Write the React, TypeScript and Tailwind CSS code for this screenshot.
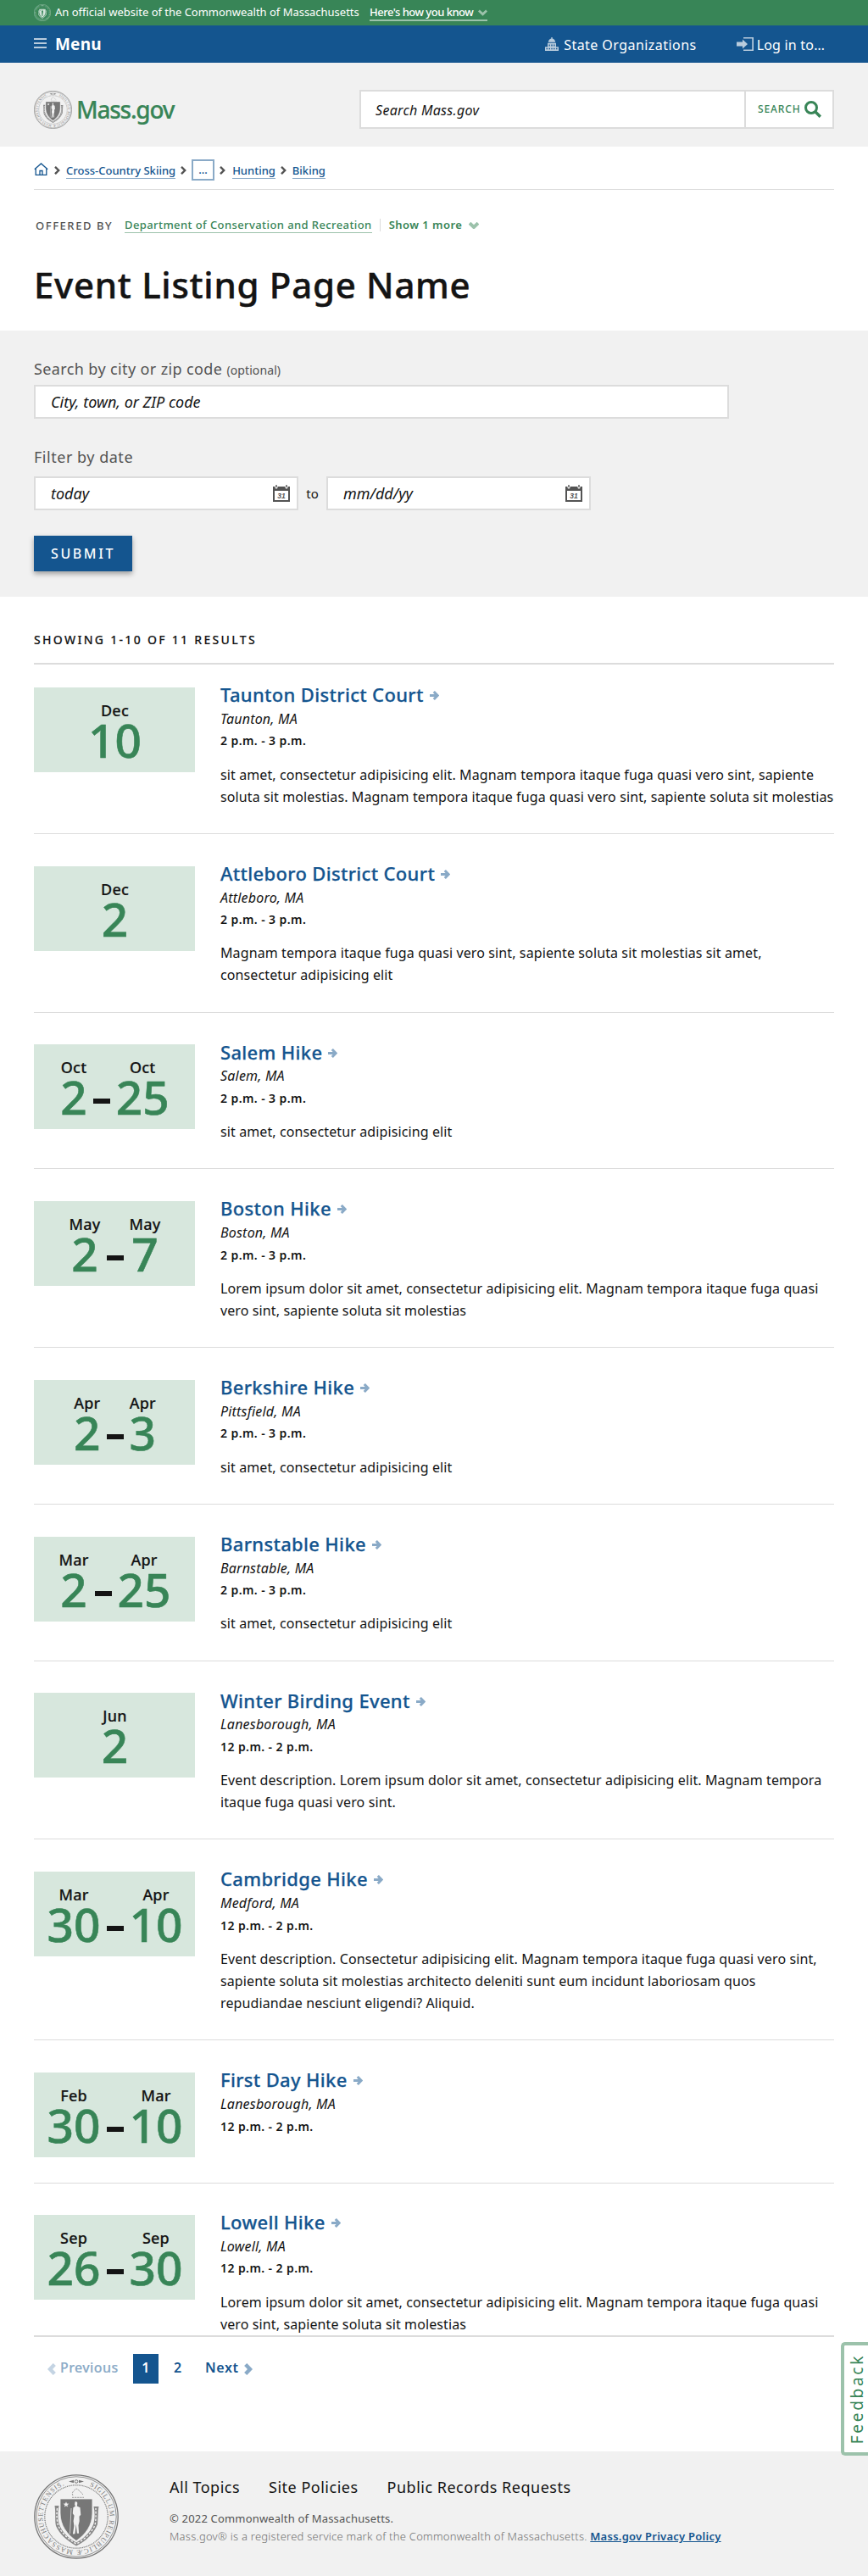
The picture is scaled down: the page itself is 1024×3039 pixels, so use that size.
import React from 'react';

type Stamp = { month: string; day: string };
type EventItem = {
  title: string;
  place: string;
  time: string;
  start: Stamp;
  end?: Stamp;
  lines: string[];
};

const EVENTS: EventItem[] = [
  {
    title: 'Taunton District Court',
    place: 'Taunton, MA',
    time: '2 p.m. - 3 p.m.',
    start: { month: 'Dec', day: '10' },
    lines: [
      'sit amet, consectetur adipisicing elit. Magnam tempora itaque fuga quasi vero sint, sapiente',
      'soluta sit molestias. Magnam tempora itaque fuga quasi vero sint, sapiente soluta sit molestias',
    ],
  },
  {
    title: 'Attleboro District Court',
    place: 'Attleboro, MA',
    time: '2 p.m. - 3 p.m.',
    start: { month: 'Dec', day: '2' },
    lines: [
      'Magnam tempora itaque fuga quasi vero sint, sapiente soluta sit molestias sit amet,',
      'consectetur adipisicing elit',
    ],
  },
  {
    title: 'Salem Hike',
    place: 'Salem, MA',
    time: '2 p.m. - 3 p.m.',
    start: { month: 'Oct', day: '2' },
    end: { month: 'Oct', day: '25' },
    lines: ['sit amet, consectetur adipisicing elit'],
  },
  {
    title: 'Boston Hike',
    place: 'Boston, MA',
    time: '2 p.m. - 3 p.m.',
    start: { month: 'May', day: '2' },
    end: { month: 'May', day: '7' },
    lines: [
      'Lorem ipsum dolor sit amet, consectetur adipisicing elit. Magnam tempora itaque fuga quasi',
      'vero sint, sapiente soluta sit molestias',
    ],
  },
  {
    title: 'Berkshire Hike',
    place: 'Pittsfield, MA',
    time: '2 p.m. - 3 p.m.',
    start: { month: 'Apr', day: '2' },
    end: { month: 'Apr', day: '3' },
    lines: ['sit amet, consectetur adipisicing elit'],
  },
  {
    title: 'Barnstable Hike',
    place: 'Barnstable, MA',
    time: '2 p.m. - 3 p.m.',
    start: { month: 'Mar', day: '2' },
    end: { month: 'Apr', day: '25' },
    lines: ['sit amet, consectetur adipisicing elit'],
  },
  {
    title: 'Winter Birding Event',
    place: 'Lanesborough, MA',
    time: '12 p.m. - 2 p.m.',
    start: { month: 'Jun', day: '2' },
    lines: [
      'Event description. Lorem ipsum dolor sit amet, consectetur adipisicing elit. Magnam tempora',
      'itaque fuga quasi vero sint.',
    ],
  },
  {
    title: 'Cambridge Hike',
    place: 'Medford, MA',
    time: '12 p.m. - 2 p.m.',
    start: { month: 'Mar', day: '30' },
    end: { month: 'Apr', day: '10' },
    lines: [
      'Event description. Consectetur adipisicing elit. Magnam tempora itaque fuga quasi vero sint,',
      'sapiente soluta sit molestias architecto deleniti sunt eum incidunt laboriosam quos',
      'repudiandae nesciunt eligendi? Aliquid.',
    ],
  },
  {
    title: 'First Day Hike',
    place: 'Lanesborough, MA',
    time: '12 p.m. - 2 p.m.',
    start: { month: 'Feb', day: '30' },
    end: { month: 'Mar', day: '10' },
    lines: [],
  },
  {
    title: 'Lowell Hike',
    place: 'Lowell, MA',
    time: '12 p.m. - 2 p.m.',
    start: { month: 'Sep', day: '26' },
    end: { month: 'Sep', day: '30' },
    lines: [
      'Lorem ipsum dolor sit amet, consectetur adipisicing elit. Magnam tempora itaque fuga quasi',
      'vero sint, sapiente soluta sit molestias',
    ],
  },
];

function Seal({ id, ink, paper, className }: { id: string; ink: string; paper: string; className: string }) {
  return (
    <svg viewBox="0 0 100 100" className={className} fill="none">
      <circle cx="50" cy="50" r="49.2" stroke={ink} strokeWidth="1.3" />
      <circle cx="50" cy="50" r="47.2" stroke={ink} strokeWidth="0.8" />
      <circle cx="50" cy="50" r="37.2" stroke={ink} strokeWidth="1.2" strokeDasharray="1 0.8" />
      <path id={id} d="M50 10.5a39.5 39.5 0 1 1-.01 0" />
      <text fill={ink} fontFamily="Liberation Serif, serif" fontSize="8.2">
        <textPath href={`#${id}`} startOffset="16" textLength="217">
          SIGILLUM REIPUBLICÆ MASSACHUSETTENSIS.
        </textPath>
      </text>
      <path d="M41 8.5l6-1.8v3.6zM59 8.5l-6-1.8v3.6z" fill={ink} />
      <circle cx="50" cy="8.5" r="1.8" stroke={ink} strokeWidth="1" />
      <path d="M46 25c-2-3 1-6 4-8 3 1 5 4 8 7M45 27.3h14" stroke={ink} strokeWidth="1" strokeDasharray="2.2 0.9" opacity="0.7" />
      <path
        d="M24.500 37h5c-1.500 8-1.500 15 0 21 3 9 10 17 20.500 22.500C60.500 75 67.500 67 70.500 58c1.500-6 1.500-13 0-20h6c-1 6-.5 12-1.500 21-4 10-12 19-25 25.500C38 78 30 70 26 61c-1.500-7 0-14-1.500-24z"
        fill={ink}
        opacity="0.85"
      />
      <path d="M27.500 40c-1 8-.5 14 1 20 4 9 11 16 21.500 22 10-5 18-13 22-22 1.500-7 1-13 1-20" stroke={paper} strokeWidth="1.400" strokeDasharray="2.600 1.800" />
      <path d="M31 29h38v17c0 14-8 25-19 32.500C39 71 31 60 31 46z" fill={ink} stroke={paper} strokeWidth="0.8" />
      <path d="M38 32.300l.9 2.300 2.500.1-2 1.500.7 2.400-2.100-1.400-2.100 1.400.7-2.400-2-1.500 2.500-.1z" fill={paper} />
      <path
        d="M48.500 32.500c1.500-.8 3.200.3 2.700 2.400l-.4 2.600 3.700 1.800.8 8.500-1.800 2 .2 5.500-1.200 5 .6 9.500h-2.200l-1.200-11-1.200 11.500-2.600.2 1.500-9.700-.8-5.500 1-6.500-1.800-2.500.6-7 2.500-1.500-.8-2.200z"
        fill={paper}
      />
      <path d="M44 40l-1.500 30" stroke={paper} strokeWidth="0.7" />
    </svg>
  );
}

function Chevron({ className, width = 3 }: { className: string; width?: number }) {
  return (
    <svg viewBox="0 0 12 8" className={className} fill="none" stroke="currentColor" strokeWidth={width}>
      <path d="M1 1.200l5 4.800 5-4.800" />
    </svg>
  );
}

function Crumb() {
  return (
    <svg viewBox="0 0 7 10" className="h-[10px] w-[7px] shrink-0 text-[#535353]" fill="none" stroke="currentColor" strokeWidth="2.400">
      <path d="M1 .8L5.200 5 1 9.200" />
    </svg>
  );
}

function Arrow() {
  return (
    <svg viewBox="0 0 11 11" className="ml-[7px] mt-[3px] h-[11px] w-[11px] shrink-0 text-[#8aaac7]" fill="none" stroke="currentColor" strokeWidth="3">
      <path d="M0 5.500h9M4.800 1l4.300 4.500L4.800 10" />
    </svg>
  );
}

function Calendar() {
  return (
    <svg viewBox="0 0 20 20" className="h-5 w-5 shrink-0">
      <path d="M0 2h20v18H0z" fill="#535353" />
      <path d="M2 7h16v11H2z" fill="#fff" />
      <path d="M2.500 0h3v3a1.500 1.500 0 0 1-3 0zM14.500 0h3v3a1.500 1.500 0 0 1-3 0z" fill="#fff" />
      <path d="M3.300 0h1.400v3H3.300zM15.300 0h1.400v3h-1.400z" fill="#535353" />
      <text x="10" y="15.500" textAnchor="middle" fontFamily="Liberation Sans, sans-serif" fontWeight="700" fontSize="8.500" fill="#535353">
        31
      </text>
    </svg>
  );
}

function DateColumn({ month, day }: Stamp) {
  return (
    <div className="flex flex-col items-center">
      <span className="text-[18px] font-medium leading-6 tracking-[0.200px] [-webkit-text-stroke:0.2px]">{month}</span>
      <span className="-mt-px text-[55px] font-medium leading-[48px] text-[#388557] [-webkit-text-stroke:0.6px]">{day}</span>
    </div>
  );
}

function EventRow({ event, last }: { event: EventItem; last: boolean }) {
  const spacing = last
    ? 'flex gap-[30px]'
    : event.lines.length > 0
      ? 'mb-[37.800px] flex gap-[30px] border-b border-[#dcdcdc] pb-[29px]'
      : 'mb-[36.800px] flex gap-[30px] border-b border-[#dcdcdc] pb-[30px]';
  return (
    <li className={spacing}>
      <div className="flex h-[100px] w-[190px] shrink-0 justify-center gap-[7px] bg-[#d7e7dd] pl-px pt-[15px]">
        <DateColumn {...event.start} />
        {event.end && (
          <>
            <span className="mt-[49px] h-[6px] w-5 bg-[#141414]" />
            <DateColumn {...event.end} />
          </>
        )}
      </div>
      <div className="min-w-0 grow">
        <h3 className="-mt-[4.800px] flex items-center whitespace-nowrap text-[22px] font-medium leading-[26px] tracking-[0.330px] text-[#14558f] [-webkit-text-stroke:0.25px]">
          {event.title}
          <Arrow />
        </h3>
        <p className="mt-[3.900px] text-base italic leading-6 tracking-[0.200px]">{event.place}</p>
        <p className="mt-[4.500px] text-sm font-semibold leading-5 tracking-[0.420px]">{event.time}</p>
        {event.lines.length > 0 && (
          <p className="mt-[16.200px] pb-[1.200px] text-base leading-[26px] tracking-[0.110px]">
            {event.lines.map((line) => (
              <span key={line} className="block whitespace-nowrap">
                {line}
              </span>
            ))}
          </p>
        )}
      </div>
    </li>
  );
}

export default function App() {
  return (
    <div className="relative h-[3039px] w-[1024px] overflow-hidden bg-white font-['Noto_Sans',sans-serif] text-[#141414]">
      <div className="flex h-[30px] items-center bg-[#388557] px-10 text-[13px] text-white">
        <Seal id="seal-banner" ink="#d5e6dc" paper="#388557" className="h-5 w-5" />
        <span className="-mt-px ml-[5px] w-[371px] whitespace-nowrap tracking-[-0.020px]">
          An official website of the Commonwealth of Massachusetts
        </span>
        <a className="mt-[2px] flex h-[18px] w-[139px] items-center justify-between whitespace-nowrap border-b-2 border-[#9cc2ab] font-medium tracking-[-0.500px]">
          <span className="-mt-px">Here's how you know</span>
          <Chevron className="h-[8px] w-[11px] text-[#9cc2ab]" />
        </a>
      </div>

      <header>
        <nav className="flex h-[44px] items-center bg-[#14558f] pl-10 pr-[51px] text-white">
          <div className="mb-[2px] flex h-3 w-[15px] flex-col justify-between">
            <span className="h-[2px] bg-[#b9ccdd]" />
            <span className="h-[2px] bg-[#b9ccdd]" />
            <span className="h-[2px] bg-[#b9ccdd]" />
          </div>
          <span className="ml-[10px] text-[19px] font-bold tracking-[0.200px]">Menu</span>
          <div className="ml-auto flex items-center gap-[6px]">
            <svg viewBox="0 0 16 16" className="h-4 w-4" fill="#b9ccdd">
              <path d="M7.300 0h1.400v1.500c2 .4 3.300 2 3.500 4.200H3.800C4 3.500 5.300 1.900 7.300 1.500z" />
              <path d="M3 6.800h10v4.400h3V16H0v-4.800h3zM4.500 8.400v2h1.300v-2zm2.800 0v2h1.400v-2zm2.900 0v2h1.300v-2zM1.500 12.800v1.400H3v-1.400zm3 0v1.400H6v-1.400zm2.800 0v1.400h1.400v-1.400zm2.700 0v1.400h1.500v-1.400zm3 0v1.400h1.500v-1.400z" fillRule="evenodd" />
            </svg>
            <span className="pt-px text-base tracking-[0.450px]">State Organizations</span>
          </div>
          <div className="ml-[47px] flex items-center gap-[4px]">
            <svg viewBox="0 0 20 16" className="h-4 w-5" fill="#b9ccdd">
              <path d="M8 0h12v16H8v-1.500h10.300v-13H8z" />
              <path d="M0 5.500h7V2.600L13 8l-6 5.400v-2.900H0z" />
            </svg>
            <span className="pt-px text-base tracking-[0.200px]">Log in to…</span>
          </div>
        </nav>
        <div className="flex h-[99px] items-start bg-[#f1f1f1] px-10">
          <div className="flex items-center pt-[33px]">
            <Seal id="seal-header" ink="#777777" paper="#f1f1f1" className="h-[45px] w-[45px]" />
            <span className="ml-[5px] text-[28px] font-medium leading-[42px] tracking-[-1.250px] text-[#388557] [-webkit-text-stroke:0.2px]">
              <span className="relative -top-px">Mass.gov</span>
            </span>
          </div>
          <div className="ml-auto mt-8 flex h-[46px] w-[560px] border-2 border-[#dcdcdc] bg-white">
            <span className="flex grow items-center pl-[17px] pt-px text-base italic tracking-[0.300px]">Search Mass.gov</span>
            <span className="flex w-[104px] items-center border-l-2 border-[#dcdcdc] pl-[14px] text-[#388557]">
              <span className="text-xs font-medium tracking-[0.880px]">SEARCH</span>
              <svg viewBox="0 0 20 20" className="-mt-px ml-[4px] h-5 w-5" fill="none" stroke="currentColor">
                <circle cx="8" cy="8" r="6.500" strokeWidth="3" />
                <path d="M12.500 12.500l6.300 6.300" strokeWidth="3.400" />
              </svg>
            </span>
          </div>
        </div>
      </header>

      <main>
        <section className="h-[217px] px-10">
          <div className="flex h-[51px] items-start border-b border-[#dcdcdc] pt-[15px] text-[13px] font-medium leading-[25px] text-[#14558f]">
            <svg viewBox="0 0 17 15" className="mt-[4px] h-[15px] w-[17px]" fill="none" stroke="#14558f" strokeWidth="1.300">
              <path d="M.8 7.800L8.500.9l7.700 6.900M2.200 6.800v7.500h12.600V6.800M7 14V9.500h3V14" />
            </svg>
            <div className="flex h-[25px] items-center pl-[7px]">
              <Crumb />
              <a className="mt-[2px] ml-[7px] border-b border-[#8aaac7] pb-px leading-[16px]">Cross-Country Skiing</a>
              <span className="w-[6px]" />
              <Crumb />
              <span className="ml-[6px] flex h-[25px] w-[27px] justify-center border-2 border-[#8aaac7] leading-[21px]">…</span>
              <span className="w-[6px]" />
              <Crumb />
              <a className="mt-[2px] ml-[8px] border-b border-[#8aaac7] pb-px leading-[16px]">Hunting</a>
              <span className="w-[6px]" />
              <Crumb />
              <a className="mt-[2px] ml-[7px] border-b border-[#8aaac7] pb-px leading-[16px]">Biking</a>
            </div>
          </div>
          <div className="mt-[32px] flex h-[20px] items-start pl-[2px] text-[13px] leading-[18px]">
            <span className="mt-px w-[105px] font-medium tracking-[1.550px] text-[#535353]">OFFERED BY</span>
            <a className="border-b border-[#9cc2ab] font-medium tracking-[0.410px] text-[#388557]">Department of Conservation and Recreation</a>
            <span className="ml-[9px] mt-[2px] h-[15px] w-px bg-[#dcdcdc]" />
            <span className="ml-[10px] font-semibold tracking-[0.450px] text-[#388557]">Show 1 more</span>
            <Chevron className="ml-[8px] mt-[6px] h-[8px] w-[12px] text-[#9cc2ab]" width={4} />
          </div>
          <h1 className="mt-[32px] text-[42px] font-medium leading-[56px] tracking-[0.710px] [-webkit-text-stroke:0.45px]">Event Listing Page Name</h1>
        </section>

        <section className="h-[314px] bg-[#f1f1f1] px-10 pt-[33px]">
          <label className="block text-lg leading-6 tracking-[0.380px] text-[#535353]">
            Search by city or zip code <span className="text-sm tracking-[0.100px]">(optional)</span>
          </label>
          <div className="mt-[7px] flex h-10 w-[820px] items-center border-2 border-[#dcdcdc] bg-white pl-[18px] text-lg italic">
            City, town, or ZIP code
          </div>
          <div className="mt-[33px] text-lg leading-6 tracking-[0.520px] text-[#535353]">Filter by date</div>
          <div className="mt-[11px] flex h-10 items-center">
            <div className="flex h-10 w-[312px] items-center justify-between border-2 border-[#dcdcdc] bg-white pl-[18px] pr-[8px] text-lg italic">
              today
              <Calendar />
            </div>
            <span className="w-[33px] pt-px text-center text-[15px]">to</span>
            <div className="flex h-10 w-[312px] items-center justify-between border-2 border-[#dcdcdc] bg-white pl-[18px] pr-[8px] text-lg italic">
              mm/dd/yy
              <Calendar />
            </div>
          </div>
          <button className="mt-[30px] flex h-[42px] w-[116px] items-center bg-[#14558f] pl-5 text-base font-medium tracking-[2.600px] text-white shadow-[0_3px_6px_rgba(0,0,0,0.35)]">
            SUBMIT
          </button>
        </section>

        <section className="h-[2188px] px-10 pt-[40px]">
          <h2 className="text-sm font-medium leading-[20px] tracking-[2.300px] [-webkit-text-stroke:0.15px]">
            <span className="relative top-px">SHOWING 1-10 OF 11 RESULTS</span>
          </h2>
          <div className="mt-[18px] h-[2px] bg-[#dcdcdc]" />
          <ul className="mt-[26.800px]">
            {EVENTS.map((event, i) => (
              <EventRow key={event.title} event={event} last={i === EVENTS.length - 1} />
            ))}
          </ul>
          <div className="-mt-px h-[2px] bg-[#dcdcdc]" />
          <div className="mt-[20px] flex h-[35px] items-center pl-4 text-base tracking-[0.400px]">
            <svg viewBox="0 0 10 14" className="mt-[1px] h-[14px] w-[10px]" fill="none" stroke="#c4d4e3" strokeWidth="4.400">
              <path d="M8.300 1.500L3 7l5.300 5.500" />
            </svg>
            <span className="ml-[5px] w-[86px] pb-[2px] font-medium text-[#8aaac7] [-webkit-text-stroke:0.15px]">Previous</span>
            <span className="flex h-[35px] w-[30px] items-center justify-center bg-[#14558f] pb-[3px] font-semibold text-white">1</span>
            <span className="ml-[18px] w-[37px] pb-[2px] font-semibold text-[#14558f]">2</span>
            <span className="pb-[2px] font-semibold tracking-[0.600px] text-[#14558f]">Next</span>
            <svg viewBox="0 0 10 14" className="ml-[6px] mt-[1px] h-[14px] w-[10px]" fill="none" stroke="#8aaac7" strokeWidth="4.400">
              <path d="M1.700 1.500L7 7l-5.300 5.500" />
            </svg>
          </div>
        </section>
      </main>

      <footer className="flex h-[147px] bg-[#f1f1f1] px-10 pt-[27px]">
        <Seal id="seal-footer" ink="#777777" paper="#f1f1f1" className="h-[100px] w-[100px]" />
        <div className="ml-[60px] pt-[3px]">
          <div className="flex gap-[34px] text-lg leading-6 tracking-[0.500px]">
            <a>All Topics</a>
            <a>Site Policies</a>
            <a>Public Records Requests</a>
          </div>
          <div className="mt-[15px] text-[13px] leading-[21px] tracking-[0.180px] text-[#535353]">
            © 2022 Commonwealth of Massachusetts.
          </div>
          <div className="whitespace-nowrap text-[13px] font-light leading-[21px] tracking-[0.250px] text-[#707070]">
            Mass.gov® is a registered service mark of the Commonwealth of Massachusetts.{' '}
            <a className="font-semibold text-[#14558f] underline">Mass.gov Privacy Policy</a>
          </div>
        </div>
      </footer>

      <div className="absolute right-0 top-[2763px] flex h-[134px] w-8 items-center justify-center rounded-l-[5px] border-4 border-r-0 border-[#9cc2ab] bg-white">
        <span className="ml-[2px] rotate-180 text-[19px] leading-6 tracking-[2.700px] text-[#388557] [writing-mode:vertical-rl]">Feedback</span>
      </div>
    </div>
  );
}
